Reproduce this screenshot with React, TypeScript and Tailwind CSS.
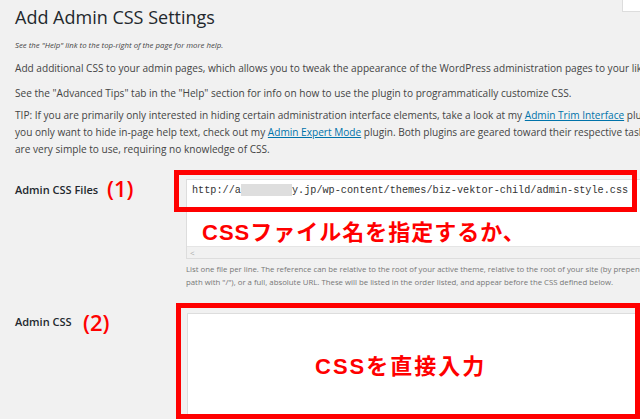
import React from 'react';

const CSS_FILE = 'y.jp/wp-content/themes/biz-vektor-child/admin-style.css';

const App: React.FC = () => {
  return (
    <div className="relative w-[640px] h-[419px] overflow-hidden bg-[#f1f1f1] font-['Open_Sans',sans-serif] text-[#444]">
      {/* help tab */}
      <div className="absolute right-0 top-0 w-[18px] h-[12px] bg-white border-l border-b border-[#ddd]" />

      <div className="pl-[15px] pt-[5px] whitespace-nowrap">
        <h1 className="text-[18px] leading-[24px] text-[#23282d] font-normal">Add Admin CSS Settings</h1>
        <p className="mt-[10px] text-[7.8px] leading-[12px] italic">See the "Help" link to the top-right of the page for more help.</p>
        <p className="mt-[9px] text-[10.1px] leading-[16px]">
          Add additional CSS to your admin pages, which allows you to tweak the appearance of the WordPress administration pages to your liking.
        </p>
        <p className="mt-[9px] text-[10.1px] leading-[16px]">
          See the "Advanced Tips" tab in the "Help" section for info on how to use the plugin to programmatically customize CSS.
        </p>
        <div className="mt-[6px] text-[10.1px] leading-[17px]">
          <div>
            TIP: If you are primarily only interested in hiding certain administration interface elements, take a look at my{' '}
            <a className="text-[#0073aa] underline">Admin Trim Interface</a> plugin. If
          </div>
          <div>
            you only want to hide in-page help text, check out my <a className="text-[#0073aa] underline">Admin Expert Mode</a> plugin. Both plugins are geared toward their respective tasks and
          </div>
          <div>are very simple to use, requiring no knowledge of CSS.</div>
        </div>
      </div>

      {/* Admin CSS Files */}
      <div className="mt-[21px] flex pl-[15px]">
        <div className="w-[171px] shrink-0 pt-[4px] text-[11px] leading-[14px] font-semibold text-[#23282d]">Admin CSS Files</div>
        <div className="flex-1 min-w-0">
          <div className="w-[470px] h-[80px] bg-white border border-[#ddd] flex flex-col">
            <div className="flex-1 px-[5px] pt-[4px] font-['Liberation_Mono',monospace] text-[10.2px] leading-[14px] text-[#333] whitespace-nowrap">
              http://a<span className="inline-block align-middle w-[51px] h-[12px] bg-[#dedede]" />{CSS_FILE}
            </div>
            <div className="h-[12px] bg-[#f1f1f1] border-t border-[#e5e5e5] flex items-center pl-[3px] text-[8px] text-[#aaa]">&lt;</div>
          </div>
          <div className="mt-[4px] text-[7.8px] leading-[13px] text-[#777] whitespace-nowrap">
            <div>List one file per line. The reference can be relative to the root of your active theme, relative to the root of your site (by prepending the</div>
            <div>path with "/"), or a full, absolute URL. These will be listed in the order listed, and appear before the CSS defined below.</div>
          </div>
        </div>
      </div>

      {/* Admin CSS */}
      <div className="mt-[24px] flex pl-[15px]">
        <div className="w-[172px] shrink-0 pt-[2px] text-[11px] leading-[14px] font-semibold text-[#23282d]">Admin CSS</div>
        <div className="flex-1 min-w-0">
          <div className="w-[460px] h-[140px] bg-white border border-[#ddd]" />
        </div>
      </div>

      {/* annotations */}
      <div className="absolute left-[174px] top-[170px] w-[463px] h-[42px] border-[5px] border-[#ff0000]" />
      <span className="absolute left-[107px] top-[174px] text-[22px] leading-[28px] font-semibold text-[#ff0000]">(1)</span>
      <span className="absolute left-[202px] top-[219px] text-[22px] leading-[28px] tracking-[1px] font-bold text-[#ff0000] font-['Liberation_Sans','Noto_Sans_CJK_JP',sans-serif]">
        CSSファイル名を指定するか、
      </span>

      <div className="absolute left-[176px] top-[303px] w-[464px] h-[116px] border-[5px] border-[#ff0000]" />
      <span className="absolute left-[83px] top-[308px] text-[22px] leading-[28px] font-semibold text-[#ff0000]">(2)</span>
      <span className="absolute left-[315px] top-[353px] text-[22px] leading-[28px] tracking-[2px] font-bold text-[#ff0000] font-['Liberation_Sans','Noto_Sans_CJK_JP',sans-serif]">
        CSSを直接入力
      </span>
    </div>
  );
};

export default App;
